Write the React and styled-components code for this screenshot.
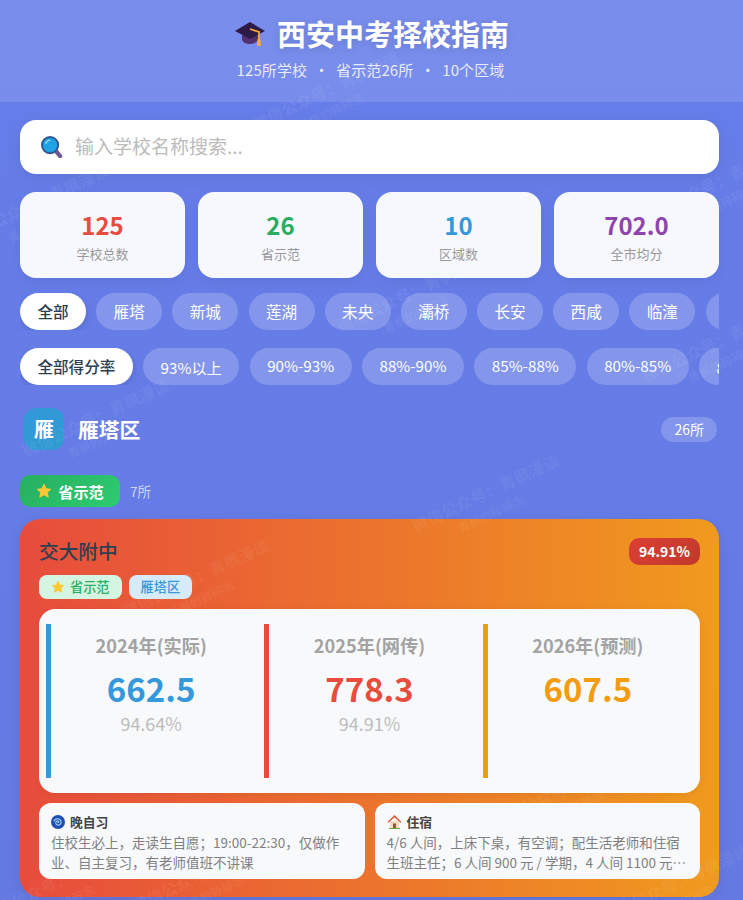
import React from 'react'
import styled, { createGlobalStyle } from 'styled-components'

const Global = createGlobalStyle`
  * { box-sizing: border-box; }
  html, body { margin: 0; padding: 0; height: 900px; overflow: hidden; }
  body { font-family: "Noto Sans CJK SC", "Noto Sans", sans-serif; }
`

const Page = styled.div`
  position: relative;
  width: 743px;
  height: 900px;
  overflow: hidden;
  background: linear-gradient(180deg, #667eea 0%, #6579e2 100%);
`

const Header = styled.header`
  height: 102px;
  padding-top: 13px;
  text-align: center;
  color: white;
  background: rgba(255, 255, 255, 0.12);
`

const Title = styled.h1`
  margin: 0;
  height: 40px;
  display: flex;
  align-items: center;
  justify-content: center;
  gap: 11px;
  font-size: 29px;
  line-height: 40px;
  font-weight: 700;
  text-shadow: 0 2px 8px rgba(0, 0, 0, 0.12);
`

const Sub = styled.div`
  margin-top: 6px;
  margin-left: -2px;
  font-size: 15px;
  line-height: 22px;
  letter-spacing: 0.1px;
  color: rgba(255, 255, 255, 0.85);
`

const Main = styled.main`
  padding: 18px 24px 0 20px;
`

const SearchBox = styled.div`
  height: 54px;
  border-radius: 16px;
  background: white;
  display: flex;
  align-items: center;
  gap: 12px;
  padding: 0 20px 0 21px;
  box-shadow: 0 4px 16px rgba(0, 0, 0, 0.08);
`

const SearchInput = styled.input`
  flex: 1;
  border: 0;
  outline: 0;
  padding: 0 0 3px;
  background: transparent;
  font-family: inherit;
  font-size: 19px;
  color: #333;
  &::placeholder { color: #bbb; opacity: 1; }
`

const Stats = styled.div`
  margin-top: 18px;
  display: grid;
  grid-template-columns: repeat(4, 165px);
  gap: 13px;
`

const StatCard = styled.div`
  height: 86px;
  border-radius: 16px;
  background: rgba(255, 255, 255, 0.95);
  text-align: center;
  padding-top: 16px;
  box-shadow: 0 4px 14px rgba(0, 0, 0, 0.06);
`

const StatValue = styled.div`
  font-size: 24px;
  line-height: 34px;
  font-weight: 700;
  color: ${p => p.$color};
`

const StatLabel = styled.div`
  margin-top: 3px;
  font-size: 13px;
  line-height: 18px;
  color: #999;
`

const FilterRow = styled.div`
  margin-top: ${p => p.$top}px;
  display: flex;
  gap: 10.2px;
  overflow: hidden;
`

const Pill = styled.div`
  flex: none;
  height: 37px;
  padding: 0 17.4px;
  border-radius: 19px;
  font-size: 15.6px;
  line-height: 36px;
  font-weight: ${p => (p.$active ? 500 : 400)};
  color: ${p => (p.$active ? '#2c3e50' : 'white')};
  background: ${p => (p.$active ? 'white' : 'rgba(255, 255, 255, 0.2)')};
  box-shadow: ${p => (p.$active ? '0 3px 10px rgba(0, 0, 0, 0.12)' : 'none')};
`

const RatePill = styled(Pill)`
  padding: 0 17.6px;
  font-size: 15.2px;
  line-height: ${p => p.$line}px;
`

const SectionHead = styled.div`
  margin-top: 23px;
  padding: 0 2px 0 4px;
  display: flex;
  align-items: center;
  height: 42px;
`

const SectionIcon = styled.div`
  width: 40px;
  height: 42px;
  border-radius: 12px;
  background: linear-gradient(135deg, #3498db, #2e9bd0);
  color: white;
  font-size: 20px;
  font-weight: 700;
  line-height: 42px;
  text-align: center;
  margin-right: 14px;
`

const SectionTitle = styled.div`
  flex: 1;
  font-size: 20.8px;
  font-weight: 700;
  color: white;
`

const CountPill = styled.div`
  height: 25px;
  padding: 0 13px;
  border-radius: 13px;
  background: rgba(255, 255, 255, 0.2);
  color: white;
  font-size: 14px;
  line-height: 25px;
`

const LevelRow = styled.div`
  margin-top: 25px;
  display: flex;
  align-items: center;
  gap: 10px;
`

const LevelBadge = styled.div`
  width: 100px;
  height: 32px;
  border-radius: 10px;
  background: linear-gradient(135deg, #27ae60, #2ecc71);
  color: white;
  font-size: 15.2px;
  font-weight: 700;
  display: flex;
  align-items: center;
  justify-content: center;
  gap: 6px;
`

const LevelCount = styled.div`
  font-size: 13.5px;
  color: rgba(255, 255, 255, 0.7);
`

const SchoolCard = styled.article`
  margin-top: 12px;
  height: 378px;
  border-radius: 20px;
  padding: 19px 19px 18px;
  background: linear-gradient(90deg, #e74c3c 0%, #f09a1e 100%);
  box-shadow: 0 4px 14px rgba(0, 0, 0, 0.08);
`

const CardTop = styled.div`
  height: 27px;
  display: flex;
  align-items: center;
  justify-content: space-between;
`

const SchoolName = styled.div`
  padding-bottom: 2px;
  font-size: 19.7px;
  line-height: 26px;
  font-weight: 500;
  color: #2c3e50;
`

const RateBadge = styled.div`
  width: 71px;
  height: 27px;
  border-radius: 10px;
  background: linear-gradient(135deg, #dc3f35, #c0392b);
  color: white;
  font-size: 14px;
  font-weight: 700;
  line-height: 26px;
  text-align: center;
`

const Tags = styled.div`
  margin-top: 10px;
  display: flex;
  gap: 7px;
`

const Tag = styled.div`
  height: 24px;
  padding: 0 12px 1px;
  border-radius: 8px;
  background: ${p => p.$bg};
  color: ${p => p.$color};
  font-size: 13.2px;
  font-weight: 500;
  display: flex;
  align-items: center;
  gap: 5px;
`

const ScorePanel = styled.div`
  margin-top: 10px;
  height: 184px;
  border-radius: 16px;
  padding: 15px 7px;
  background: #f8f9fb;
  display: grid;
  grid-template-columns: repeat(3, 1fr);
  gap: 8px;
  box-shadow: 0 2px 8px rgba(0, 0, 0, 0.06);
`

const ScoreCol = styled.div`
  border-left: 5px solid ${p => p.$color};
  text-align: center;
  padding: 8px 5px 0 0;
`

const ScoreYear = styled.div`
  font-size: 18.2px;
  line-height: 26px;
  font-weight: 700;
  color: #a3a3a3;
`

const ScoreValue = styled.div`
  margin-top: 8px;
  font-size: 33px;
  line-height: 44px;
  font-weight: 700;
  color: ${p => p.$color};
`

const ScoreRate = styled.div`
  font-size: 18px;
  line-height: 26px;
  color: #bdbdbd;
`

const InfoGrid = styled.div`
  margin-top: 10px;
  display: grid;
  grid-template-columns: 1fr 1fr;
  gap: 10px;
`

const InfoCard = styled.div`
  height: 76px;
  border-radius: 12px;
  background: #f8f9fb;
  padding: 9px 12px 0;
`

const InfoTitle = styled.div`
  height: 19px;
  display: flex;
  align-items: center;
  gap: 5px;
  font-size: 12.8px;
  font-weight: 700;
  color: #444;
`

const InfoText = styled.div`
  margin-top: 2px;
  font-size: 13.5px;
  line-height: 19.5px;
  color: #7f7f7f;
  display: -webkit-box;
  -webkit-line-clamp: 2;
  -webkit-box-orient: vertical;
  overflow: hidden;
`

const Watermark = styled.div`
  position: absolute;
  left: ${p => p.$x}px;
  top: ${p => p.$y}px;
  transform: rotate(-25deg);
  transform-origin: center;
  white-space: nowrap;
  font-size: 16px;
  font-weight: 700;
  line-height: 22px;
  color: rgba(255, 255, 255, 0.07);
  pointer-events: none;
  small {
    display: block;
    font-size: 12px;
    padding-left: 40px;
  }
`

const Cap = () => (
  <svg width="32" height="30" viewBox="0 0 32 30">
    <path d="M8 14v7c0 3 4 5 8 5s8-2 8-5v-7z" fill="#55306e" />
    <path d="M16 4 31 13 16 21 1 13z" fill="#2d1b45" />
    <path d="M16 11l9 3v8" fill="none" stroke="#f4a93a" strokeWidth="1.8" />
    <path d="M23.6 21h2.8l.6 7h-4z" fill="#f4a93a" />
  </svg>
)

const Magnifier = () => (
  <svg width="22" height="22" viewBox="0 0 23 23">
    <path d="M15 15l5 6" stroke="#6f5a92" strokeWidth="4.5" strokeLinecap="round" />
    <circle cx="9.5" cy="9.5" r="8.5" fill="#1fa2e6" stroke="#30588f" strokeWidth="2" />
    <path d="M5 8c.5-2 2-3.4 4-3.6" fill="none" stroke="#8fd6f7" strokeWidth="1.5" strokeLinecap="round" />
  </svg>
)

const Star = ({ size }) => (
  <svg width={size} height={size} viewBox="0 0 24 24">
    <path
      d="M12 2l3 6.6 7 .8-5.200 4.800 1.500 7L12 17.600 5.700 21.200l1.500-7L2 9.400l7-.8z"
      fill="#fcc934"
      stroke="#fcc934"
      strokeWidth="1.500"
      strokeLinejoin="round"
    />
  </svg>
)

const Spiral = () => (
  <svg width="14" height="14" viewBox="0 0 14 14">
    <circle cx="7" cy="7" r="7" fill="#1f4fb4" />
    <path
      d="M7 7.500c.8 0 1-1.200 0-1.500-1.500-.3-2.500 1-2.200 2.300.4 1.700 2.600 2.300 4 1.300 1.800-1.300 1.700-4-.1-5.200C6.600 3.100 3.900 3.800 3 6"
      fill="none"
      stroke="#9fd0f5"
      strokeWidth="1.200"
      strokeLinecap="round"
    />
  </svg>
)

const House = () => (
  <svg width="15" height="15" viewBox="0 0 15 15">
    <path d="M3 7h9v7.500H3z" fill="#f3dcc0" />
    <path d="M6 9.500h3v5H6z" fill="#8a5a3a" />
    <path d="M7.500 1 14.500 8l-1 .8-6-5.500-6 5.500-1-.8z" fill="#e2562d" />
    <path d="M2 14h11v1H2z" fill="#6ba644" />
  </svg>
)

const districts = ['全部', '雁塔', '新城', '莲湖', '未央', '灞桥', '长安', '西咸', '临潼', '高新']
const rates = ['93%以上', '90%-93%', '88%-90%', '85%-88%', '80%-85%', '80%以下']

const stats = [
  { value: '125', label: '学校总数', color: '#e74c3c' },
  { value: '26', label: '省示范', color: '#27ae60' },
  { value: '10', label: '区域数', color: '#3498db' },
  { value: '702.0', label: '全市均分', color: '#8e44ad' },
]

const scores = [
  { year: '2024年(实际)', value: '662.5', rate: '94.64%', color: '#3498db' },
  { year: '2025年(网传)', value: '778.3', rate: '94.91%', color: '#e74c3c' },
  { year: '2026年(预测)', value: '607.5', color: '#f39c12' },
]

const marks = [
  [250, 78], [335, 280], [20, 405], [410, 480], [120, 565], [-40, 190],
  [640, 170], [640, 330], [600, 870], [-20, 870], [490, 775], [130, 860],
]

function App() {
  return (
    <Page>
      <Global />
      <Header>
        <Title><Cap />西安中考择校指南</Title>
        <Sub>125所学校 &nbsp;•&nbsp; 省示范26所 &nbsp;•&nbsp; 10个区域</Sub>
      </Header>
      <Main>
        <SearchBox>
          <Magnifier />
          <SearchInput placeholder="输入学校名称搜索..." />
        </SearchBox>
        <Stats>
          {stats.map(s => (
            <StatCard key={s.label}>
              <StatValue $color={s.color}>{s.value}</StatValue>
              <StatLabel>{s.label}</StatLabel>
            </StatCard>
          ))}
        </Stats>
        <FilterRow $top={15}>
          {districts.map((d, i) => <Pill key={d} $active={i === 0}>{d}</Pill>)}
        </FilterRow>
        <FilterRow $top={18}>
          <Pill $active>全部得分率</Pill>
          {rates.map(r => <RatePill key={r} $line={r.includes('-') ? 34 : 38}>{r}</RatePill>)}
        </FilterRow>
        <SectionHead>
          <SectionIcon>雁</SectionIcon>
          <SectionTitle>雁塔区</SectionTitle>
          <CountPill>26所</CountPill>
        </SectionHead>
        <LevelRow>
          <LevelBadge><Star size={16} />省示范</LevelBadge>
          <LevelCount>7所</LevelCount>
        </LevelRow>
        <SchoolCard>
          <CardTop>
            <SchoolName>交大附中</SchoolName>
            <RateBadge>94.91%</RateBadge>
          </CardTop>
          <Tags>
            <Tag $bg="#d5f5e3" $color="#27ae60"><Star size={14} />省示范</Tag>
            <Tag $bg="#d6eaf8" $color="#3498db">雁塔区</Tag>
          </Tags>
          <ScorePanel>
            {scores.map(s => (
              <ScoreCol key={s.year} $color={s.color}>
                <ScoreYear>{s.year}</ScoreYear>
                <ScoreValue $color={s.color}>{s.value}</ScoreValue>
                {s.rate && <ScoreRate>{s.rate}</ScoreRate>}
              </ScoreCol>
            ))}
          </ScorePanel>
          <InfoGrid>
            <InfoCard>
              <InfoTitle><Spiral />晚自习</InfoTitle>
              <InfoText>住校生必上，走读生自愿；19:00-22:30，仅做作业、自主复习，有老师值班不讲课</InfoText>
            </InfoCard>
            <InfoCard>
              <InfoTitle><House />住宿</InfoTitle>
              <InfoText>4/6 人间，上床下桌，有空调；配生活老师和住宿生班主任；6 人间 900 元 / 学期，4 人间 1100 元 / 学期，含床上用品</InfoText>
            </InfoCard>
          </InfoGrid>
        </SchoolCard>
      </Main>
      {marks.map(([x, y]) => (
        <Watermark key={`${x}-${y}`} $x={x} $y={y}>
          微信公众号：青枫漫谈
          <small>青枫的碎碎念</small>
        </Watermark>
      ))}
    </Page>
  )
}

export default App
